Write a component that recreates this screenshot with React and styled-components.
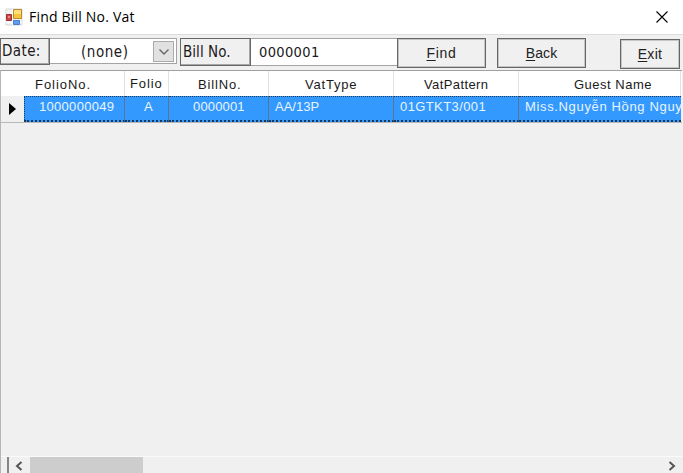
import React from "react";
import styled, { createGlobalStyle } from "styled-components";

const GlobalStyle = createGlobalStyle`
  * { box-sizing: border-box; }
  body { margin: 0; overflow: hidden; background: #f0f0f0; }
`;

const Window = styled.main`
  width: 683px;
  height: 473px;
  display: flex;
  flex-direction: column;
  background: #f0f0f0;
  color: #1a1a1a;
  overflow: hidden;
  font-family: "Liberation Sans", Arial, sans-serif;
`;

const TitleBar = styled.header`
  height: 34px;
  flex: none;
  display: flex;
  align-items: center;
  background: #fff;
  padding: 0 14px 0 5px;
`;

const Title = styled.h1`
  margin: 0 auto 0 6px;
  font: 400 14px/20px "Open Sans", "Noto Sans", sans-serif;
  letter-spacing: ${(p) => p.$track};
  color: #000;
  white-space: nowrap;
`;

const CloseButton = styled.button`
  border: 0;
  padding: 0;
  background: none;
  display: flex;
`;

const Toolbar = styled.div`
  height: 36px;
  flex: none;
  display: flex;
  align-items: flex-start;
  border-top: 1px solid #dcdcdc;
  padding-top: 3px;
`;

const Text = styled.span`
  font-family: ${(p) => p.$font || "inherit"};
  font-size: ${(p) => p.$size || 14}px;
  letter-spacing: ${(p) => p.$track || 0}px;
  line-height: 18px;
  white-space: pre;
`;

const tahoma = '"DejaVu Sans Condensed", "DejaVu Sans", sans-serif';

const FieldLabel = styled.label`
  width: ${(p) => p.$width}px;
  height: ${(p) => p.$height}px;
  border: 1px solid #686868;
  box-shadow: inset -1px -1px #a6a6a6;
  background: #f0f0f0;
  padding: ${(p) => p.$top}px 0 0 ${(p) => p.$left}px;
  color: #201820;
`;

const Combo = styled.div`
  width: 127px;
  height: 26px;
  border: 1px solid #a4a4a4;
  border-left: 0;
  background: #fff;
  display: flex;
  align-items: center;
  justify-content: space-between;
  padding: 1px 2px 0 31px;
  margin-right: 3px;
  color: #201820;
`;

const DropButton = styled.button`
  width: 21px;
  height: 21px;
  border: 1px solid #aaa;
  background: #e1e1e1;
  padding: 0;
  display: flex;
  align-items: center;
  justify-content: center;
`;

const Input = styled.div`
  width: 146px;
  height: 28px;
  border: 1px solid #a4a4a4;
  border-left: 0;
  border-right: 0;
  background: #fff;
  padding: 4px 0 0 8px;
  color: #201820;
`;

const Button = styled.button`
  width: ${(p) => p.$width}px;
  height: 30px;
  margin: ${(p) => p.$top || 0}px 0 0 ${(p) => p.$gap || 0}px;
  padding: 0 0 1px;
  border: 1px solid #666;
  box-shadow: inset 0 0 0 1px #c5c5c5;
  background: #f0f0f0;
  color: #222;
  font: 14px/18px "Liberation Sans", Arial, sans-serif;
  letter-spacing: ${(p) => p.$track}px;
  u { text-underline-offset: 2px; text-decoration-thickness: 1px; }
`;

const Grid = styled.section`
  width: 682px;
  flex: 1;
  border-top: 1px solid #a0a0a0;
  border-left: 1px solid #b5b5b5;
  display: flex;
  flex-direction: column;
`;

const columns = "23px 101px 44px 100px 125px 125px 162px";

const HeaderRow = styled.div`
  display: grid;
  grid-template-columns: ${columns};
  height: 25px;
  background: #fff;
  overflow: hidden;
`;

const HeaderCell = styled.div`
  border-right: 1px solid #e2e2e2;
  padding: ${(p) => p.$top || 4}px 0 0 ${(p) => p.$left || 0}px;
`;

const DataRow = styled.div`
  display: grid;
  grid-template-columns: ${columns};
  height: 27px;
  border-bottom: 1px solid #b8b8b8;
  overflow: hidden;
`;

const Marker = styled.div`
  padding: 7px 0 0 8px;
  display: flex;
  align-items: flex-start;
`;

const DataCell = styled.div`
  background: #3399ff;
  color: #e8f4ff;
  border-top: 1px dotted #16395c;
  border-bottom: 2px dotted #16395c;
  border-right: ${(p) => (p.$last ? "0" : "1px solid #56759a")};
  border-left: ${(p) => (p.$first ? "1px dotted #16395c" : "0")};
  padding: 0 0 0 ${(p) => p.$left}px;
  white-space: nowrap;
`;

const ScrollRow = styled.footer`
  height: 17px;
  margin-top: auto;
  display: flex;
  align-items: center;
  border-top: 1px solid #fafafa;
`;

const SplitHandle = styled.div`
  width: 8px;
  height: 17px;
  border-right: 2px solid #858585;
`;

const Arrow = styled.svg`
  margin: 2px ${(p) => p.$right}px 0 ${(p) => p.$left};
`;

const Thumb = styled.div`
  width: 113px;
  height: 16px;
  background: #cdcdcd;
`;

const headers = [
  { text: "FolioNo.", left: 11, track: 0.95 },
  { text: "Folio", left: 5, top: 3, track: 0.9 },
  { text: "BillNo.", left: 29, track: 0.85 },
  { text: "VatType", left: 36, track: 0.8 },
  { text: "VatPattern", left: 30, track: 0.4 },
  { text: "Guest Name", left: 55, track: 0.5 },
];

const row = [
  { text: "1000000049", left: 14, track: 0.3 },
  { text: "A", left: 19, track: 0 },
  { text: "0000001", left: 24, track: 0.15 },
  { text: "AA/13P", left: 6, track: 0 },
  { text: "01GTKT3/001", left: 6, track: 0.4 },
  { text: "Miss.Nguyễn Hồng Nguy", left: 6, track: 0.65 },
];

function FormIcon() {
  return (
    <svg width="18" height="18" viewBox="0 0 18 18">
      <path d="M1 1h16v16H1z" fill="#f3f3f3" stroke="#d7d7d7" />
      <path d="M1 14.5h16M7.5 1v16" stroke="#fff" />
      <path d="M1.5 6.5h5v6h-5z" fill="#cf4540" stroke="#963438" />
      <path d="M8.5 1.5h8v9h-8z" fill="#f5c53c" stroke="#bd8a2c" />
      <path d="M9 2h7v4H9z" fill="#ffe07a" />
      <path d="M8.5 12.5h6v4h-6z" fill="#629ded" stroke="#467fc8" />
      <path d="M3 8h2v2H3z" fill="#ed8880" />
    </svg>
  );
}

export default function App() {
  return (
    <Window>
      <GlobalStyle />
      <TitleBar>
        <FormIcon />
        <Title $track="0.2px">Find Bill No. Vat</Title>
        <CloseButton aria-label="Close">
          <svg width="14" height="14" viewBox="0 0 14 14">
            <path d="M1.5 1.5l11 11M12.5 1.5l-11 11" stroke="#000" strokeWidth="1.1" />
          </svg>
        </CloseButton>
      </TitleBar>
      <Toolbar>
        <FieldLabel $width={50} $height={27} $left={1} $top={3}>
          <Text $font={tahoma} $size={15} $track={0.4}>Date:</Text>
        </FieldLabel>
        <Combo>
          <Text $font={tahoma} $size={15} $track={0.55}>(none)</Text>
          <DropButton aria-label="Open calendar">
            <svg width="12" height="8" viewBox="0 0 12 8">
              <path d="M1.5 1.5L6 6l4.5-4.5" fill="none" stroke="#666" strokeWidth="1.4" />
            </svg>
          </DropButton>
        </Combo>
        <FieldLabel $width={71} $height={28} $left={2} $top={4}>
          <Text $font={tahoma} $size={15} $track={0.05}>Bill No.</Text>
        </FieldLabel>
        <Input>
          <Text $font={tahoma} $size={14.5} $track={0.35}>0000001</Text>
        </Input>
        <Button $width={89} $track={0.7}><u>F</u>ind</Button>
        <Button $width={89} $gap={11} $track={0.1}><u>B</u>ack</Button>
        <Button $width={60} $gap={34} $top={1} $track={0.3}><u>E</u>xit</Button>
      </Toolbar>
      <Grid>
        <HeaderRow>
          <div />
          {headers.map((h) => (
            <HeaderCell key={h.text} $left={h.left} $top={h.top}>
              <Text $size={13} $track={h.track}>{h.text}</Text>
            </HeaderCell>
          ))}
        </HeaderRow>
        <DataRow>
          <Marker>
            <svg width="7" height="12" viewBox="0 0 7 12">
              <path d="M0 0l7 6-7 6z" fill="#000" />
            </svg>
          </Marker>
          {row.map((c, i) => (
            <DataCell key={c.text} $left={c.left} $first={i === 0} $last={i === row.length - 1}>
              <Text $size={13} $track={c.track}>{c.text}</Text>
            </DataCell>
          ))}
        </DataRow>
        <ScrollRow>
          <SplitHandle />
          <Arrow $left="6px" $right={7} width="8" height="10" viewBox="0 0 8 10">
            <path d="M6.5 1L2 5l4.5 4" fill="none" stroke="#555" strokeWidth="2" />
          </Arrow>
          <Thumb />
          <Arrow $left="auto" $right={6} width="8" height="10" viewBox="0 0 8 10">
            <path d="M1.5 1L6 5 1.5 9" fill="none" stroke="#555" strokeWidth="2" />
          </Arrow>
        </ScrollRow>
      </Grid>
    </Window>
  );
}
